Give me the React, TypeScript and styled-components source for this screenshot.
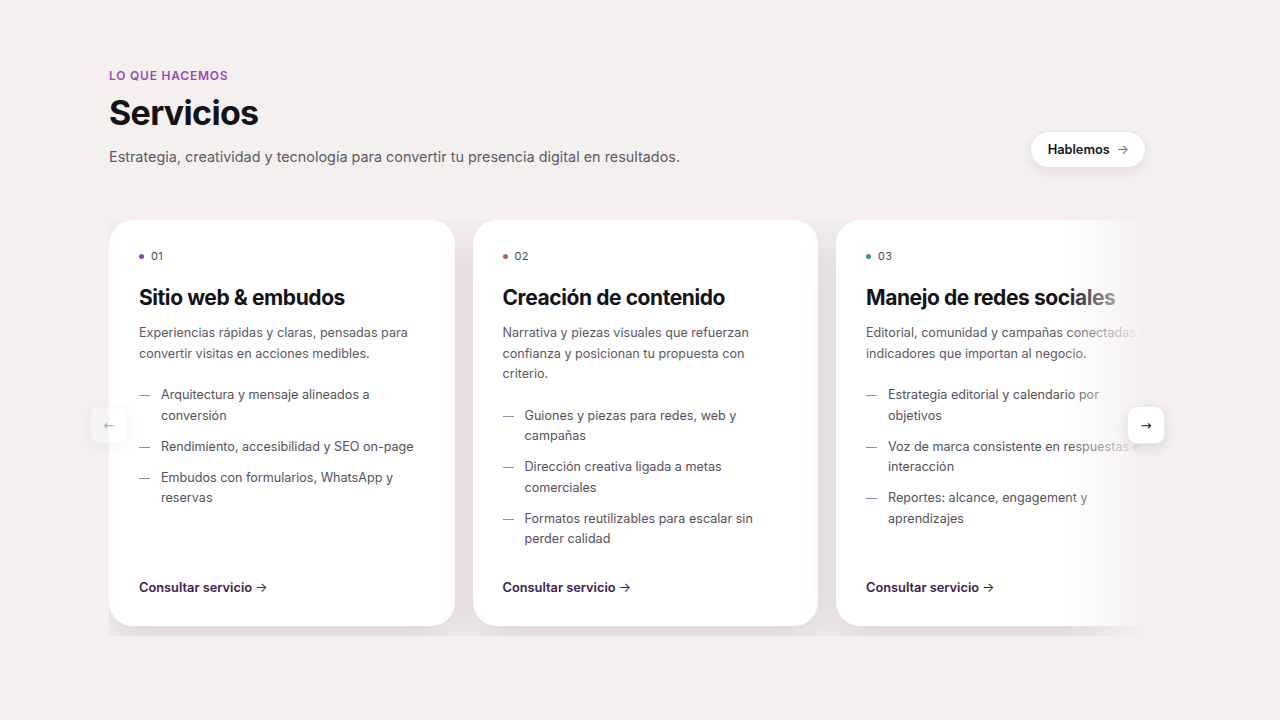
import styled, { createGlobalStyle } from "styled-components";

const GlobalStyle = createGlobalStyle`
  * { box-sizing: border-box; }
  html, body {
    margin: 0;
    background: #f4f0ef;
    font-family: Inter, "Noto Sans", sans-serif;
    -webkit-font-smoothing: antialiased;
  }
`;

const Section = styled.section`
  width: 1280px;
  height: 720px;
  padding: 69px 135px 0 109px;
`;

const Header = styled.header`
  display: flex;
  justify-content: space-between;
  align-items: flex-end;
`;

const Eyebrow = styled.div`
  font-size: 12px;
  font-weight: 600;
  letter-spacing: 0.065em;
  color: #9a4bb8;
  line-height: 14px;
`;

const Title = styled.h2`
  margin: 9px 0 0;
  font-size: 34px;
  line-height: 42px;
  font-weight: 700;
  letter-spacing: -0.02em;
  color: #15131a;
`;

const Lead = styled.p`
  margin: 12px 0 0;
  font-size: 14.4px;
  line-height: 22px;
  color: #5f5a66;
`;

const PillButton = styled.button`
  display: flex;
  align-items: center;
  gap: 7px;
  height: 37px;
  padding: 0 16px 0 17px;
  margin-right: -1px;
  border-radius: 999px;
  border: 1px solid #ebe5e8;
  background: #fff;
  box-shadow: 0 4px 12px rgba(60, 30, 70, 0.08);
  font-family: inherit;
  font-size: 12.8px;
  font-weight: 600;
  color: #17141c;
  span {
    color: #8e4fb0;
    font-weight: 400;
  }
`;

const Carousel = styled.div`
  position: relative;
  margin-top: 52px;
`;

const Viewport = styled.div`
  overflow: hidden;
  padding-bottom: 10px;
`;

const Track = styled.div`
  display: flex;
  gap: 18px;
`;

const Card = styled.article`
  flex: 0 0 345.5px;
  height: 406px;
  background: #fff;
  border-radius: 24px;
  padding: 30px 30px 29px;
  display: flex;
  flex-direction: column;
  box-shadow: 0 16px 36px rgba(70, 40, 80, 0.13);
`;

const Index = styled.div<{ $dot: string }>`
  display: flex;
  align-items: center;
  gap: 7px;
  font-size: 11px;
  line-height: 12px;
  color: #4d4953;
  letter-spacing: 0.03em;
  &::before {
    content: "";
    width: 5px;
    height: 5px;
    border-radius: 50%;
    background: ${(p) => p.$dot};
  }
`;

const CardTitle = styled.h3`
  margin: 21px 0 0;
  font-size: 21px;
  line-height: 30px;
  font-weight: 700;
  letter-spacing: -0.02em;
  color: #15131a;
`;

const CardText = styled.p`
  margin: 10px 0 0;
  font-size: 12.6px;
  line-height: 20.5px;
  color: #5c5866;
`;

const List = styled.ul`
  list-style: none;
  margin: 21px 0 0;
  padding: 0;
  display: flex;
  flex-direction: column;
  gap: 10.5px;
`;

const Item = styled.li`
  display: grid;
  grid-template-columns: 11px 1fr;
  column-gap: 11px;
  font-size: 12.6px;
  line-height: 20.5px;
  color: #55515c;
  &::before {
    content: "";
    height: 1px;
    margin-top: 10px;
    background: #a282b2;
  }
`;

const CardLink = styled.a`
  margin-top: auto;
  font-size: 12.8px;
  font-weight: 600;
  line-height: 18px;
  color: #3c2150;
  text-decoration: none;
  span {
    font-weight: 400;
  }
`;

const Fade = styled.div`
  position: absolute;
  top: 0;
  right: 0;
  bottom: 0;
  width: 82px;
  pointer-events: none;
  background: linear-gradient(to right, rgba(244, 240, 239, 0), #f4f0ef);
`;

const Arrow = styled.button<{ $side: "left" | "right"; $disabled?: boolean }>`
  position: absolute;
  top: 186px;
  ${(p) => (p.$side === "left" ? "left: -19px;" : "right: -20px;")}
  width: 38px;
  height: 38px;
  border-radius: 10px;
  border: 1px solid #efeaec;
  background: #fff;
  box-shadow: 0 4px 12px rgba(60, 30, 70, 0.12);
  display: flex;
  align-items: center;
  justify-content: center;
  font-family: "DejaVu Sans", sans-serif;
  font-size: 13px;
  color: #15131a;
  opacity: ${(p) => (p.$disabled ? 0.35 : 1)};
  padding: 0;
`;

interface Service {
  n: string;
  dot: string;
  title: string;
  text: string;
  items: string[];
}

const services: Service[] = [
  {
    n: "01",
    dot: "#8e44ad",
    title: "Sitio web & embudos",
    text: "Experiencias rápidas y claras, pensadas para convertir visitas en acciones medibles.",
    items: [
      "Arquitectura y mensaje alineados a conversión",
      "Rendimiento, accesibilidad y SEO on-page",
      "Embudos con formularios, WhatsApp y reservas",
    ],
  },
  {
    n: "02",
    dot: "#c65a4a",
    title: "Creación de contenido",
    text: "Narrativa y piezas visuales que refuerzan confianza y posicionan tu propuesta con criterio.",
    items: [
      "Guiones y piezas para redes, web y campañas",
      "Dirección creativa ligada a metas comerciales",
      "Formatos reutilizables para escalar sin perder calidad",
    ],
  },
  {
    n: "03",
    dot: "#2e9e72",
    title: "Manejo de redes sociales",
    text: "Editorial, comunidad y campañas conectadas a indicadores que importan al negocio.",
    items: [
      "Estrategia editorial y calendario por objetivos",
      "Voz de marca consistente en respuestas e interacción",
      "Reportes: alcance, engagement y aprendizajes",
    ],
  },
];

export default function App() {
  return (
    <>
      <GlobalStyle />
      <Section>
        <Header>
          <div>
            <Eyebrow>LO QUE HACEMOS</Eyebrow>
            <Title>Servicios</Title>
            <Lead>
              Estrategia, creatividad y tecnología para convertir tu presencia digital en resultados.
            </Lead>
          </div>
          <PillButton>
            Hablemos <span>→</span>
          </PillButton>
        </Header>

        <Carousel>
          <Viewport>
            <Track>
              {services.map((s) => (
                <Card key={s.n}>
                  <Index $dot={s.dot}>{s.n}</Index>
                  <CardTitle>{s.title}</CardTitle>
                  <CardText>{s.text}</CardText>
                  <List>
                    {s.items.map((it) => (
                      <Item key={it}>{it}</Item>
                    ))}
                  </List>
                  <CardLink href="#">
                    Consultar servicio <span>→</span>
                  </CardLink>
                </Card>
              ))}
            </Track>
          </Viewport>
          <Fade />
          <Arrow $side="left" $disabled>
            ←
          </Arrow>
          <Arrow $side="right">→</Arrow>
        </Carousel>
      </Section>
    </>
  );
}
